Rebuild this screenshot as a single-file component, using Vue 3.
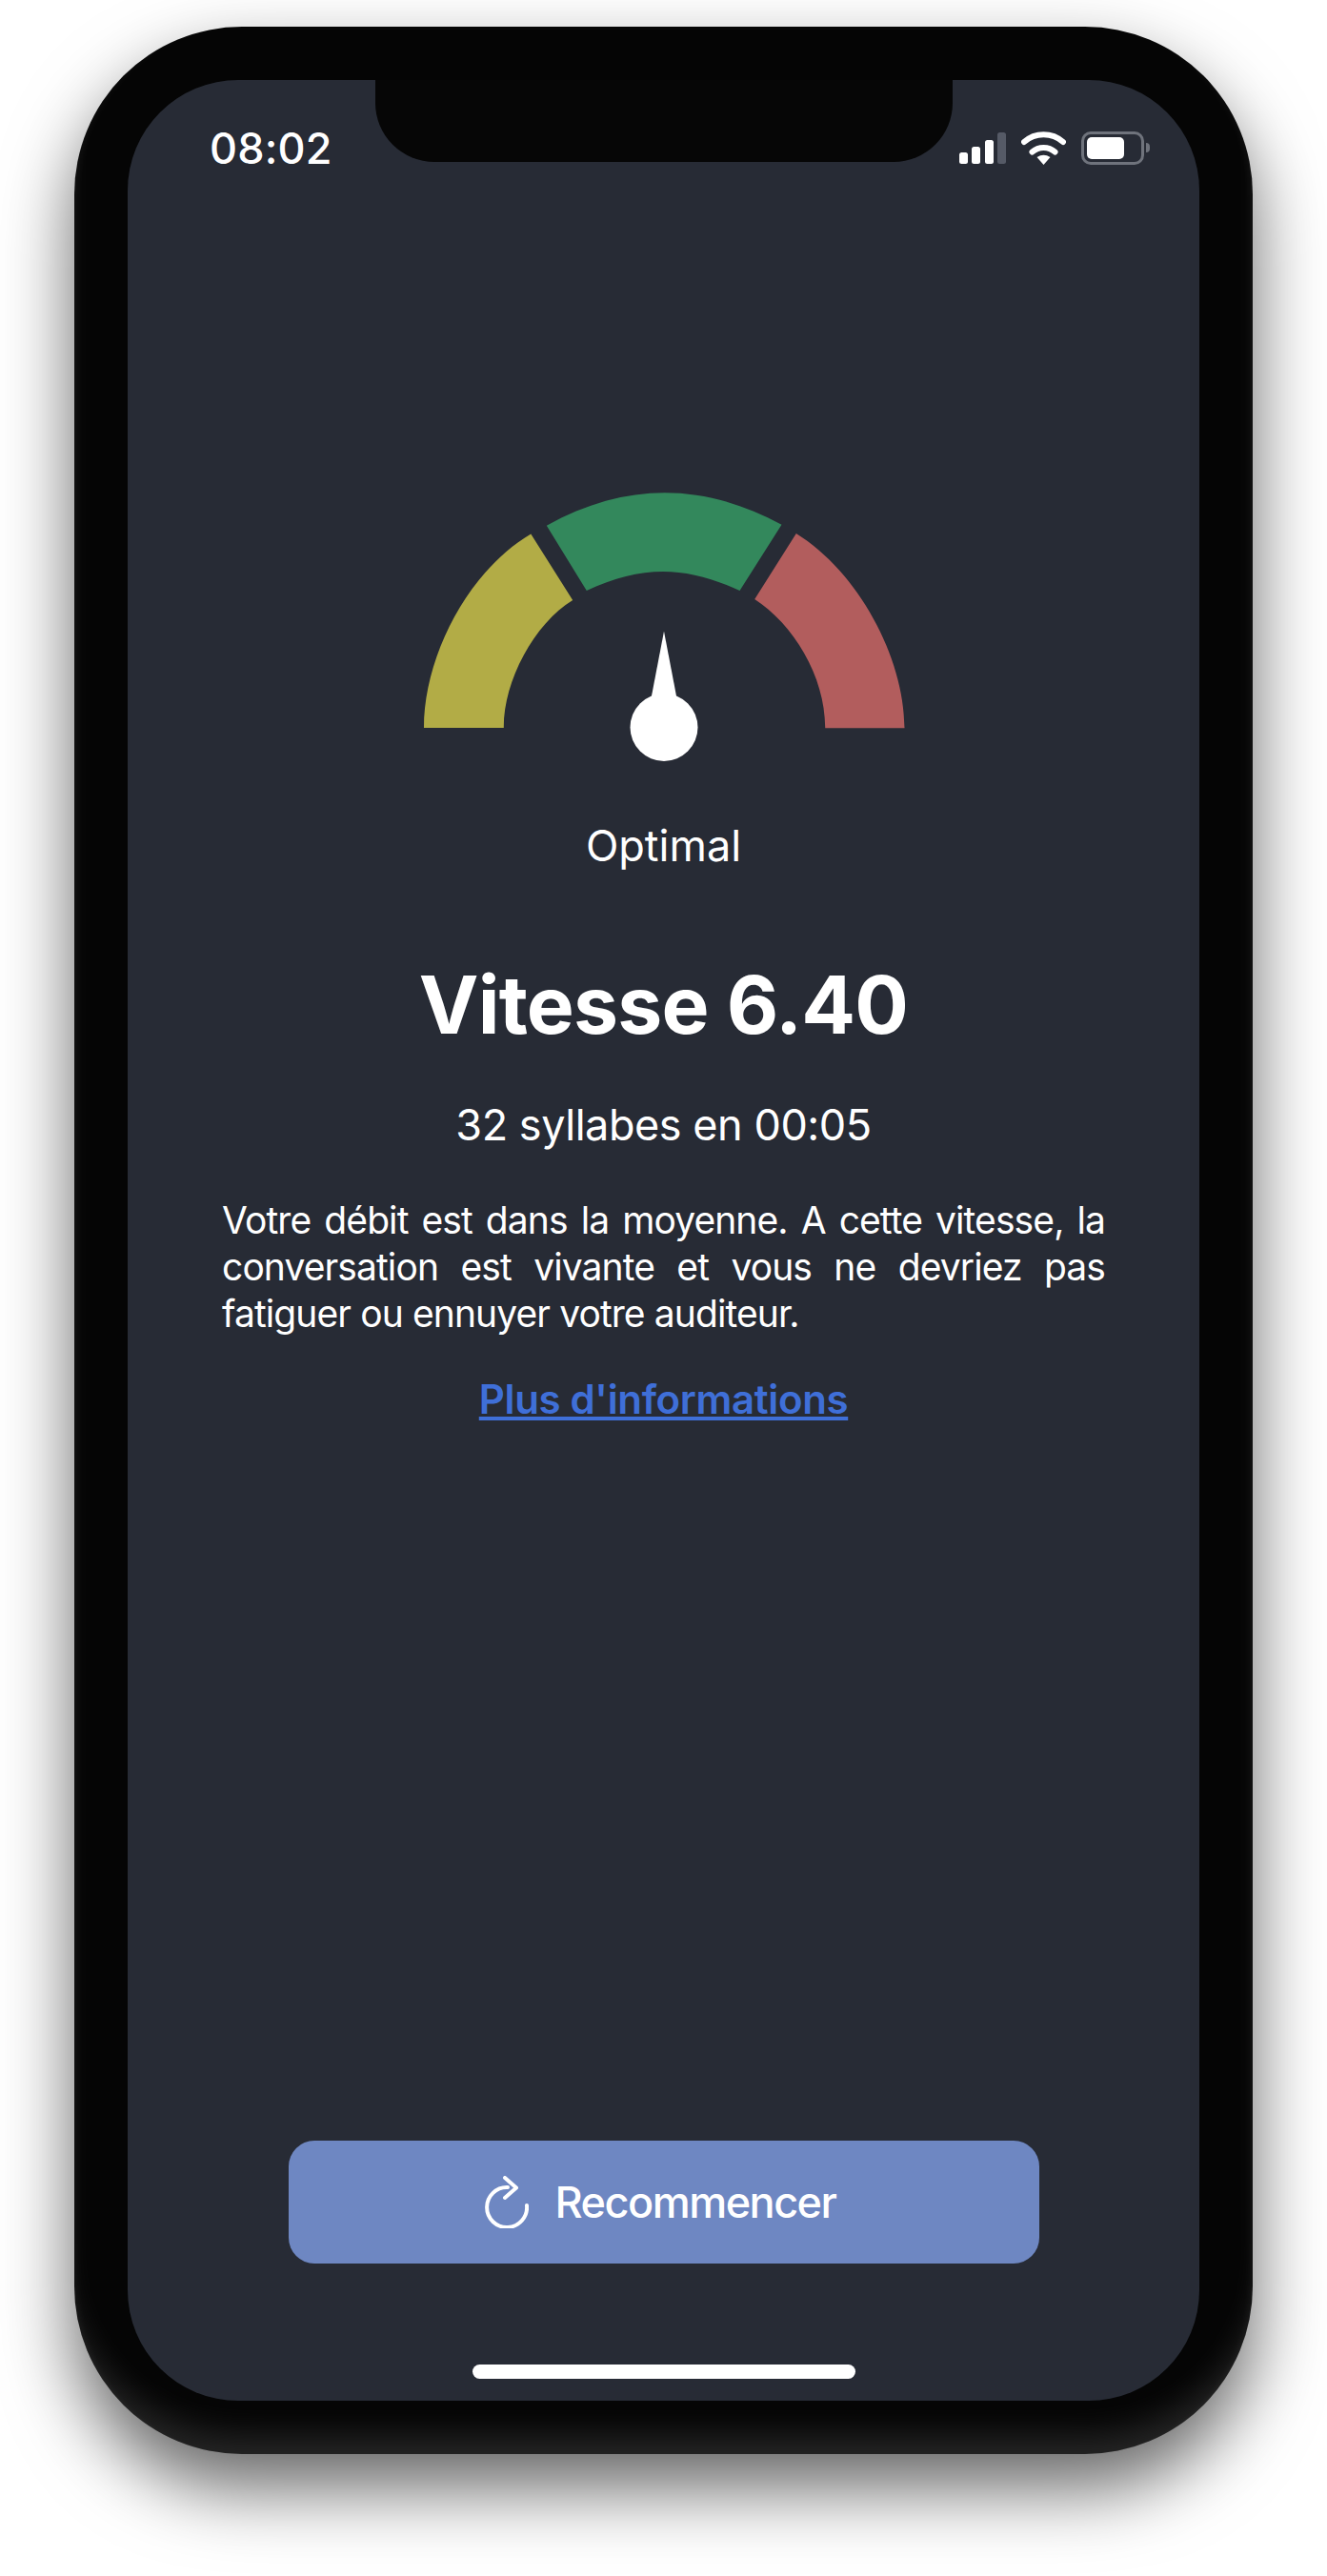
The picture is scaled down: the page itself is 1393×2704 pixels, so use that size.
<script setup>
const segments = [
  {
    color: '#b2ac46',
    d: 'M444.5 764 C444.5 690 490 600 556.8 560.5 L600.7 630 C560 655 528 715 528.3 764 Z'
  },
  {
    color: '#33885c',
    d: 'M573.3 551.7 C656 506 737 506 820 550.7 L776 620 C718 593.3 673 593.3 615.3 620 Z'
  },
  {
    color: '#b25d5d',
    d: 'M835.3 560 C900 600 949 690 949 764.3 L865.7 764.3 C866 710 832 655 791.7 629 Z'
  }
]
const bars = [
  { h: 12, on: true },
  { h: 18, on: true },
  { h: 25, on: true },
  { h: 33, on: false }
]
</script>

<template>
  <div class="page">
    <div class="phone">
      <div class="screen">
        <div class="notch"></div>

        <header class="status">
          <span class="time">08:02</span>
          <div class="indicators">
            <div class="signal">
              <i v-for="b in bars" :key="b.h" :class="{ off: !b.on }" :style="{ height: b.h + 'px' }"></i>
            </div>
            <svg class="wifi" width="47" height="35" viewBox="0 0 47 35" fill="none">
              <path d="M3 11 A31 31 0 0 1 44 11" stroke="#fff" stroke-width="6" stroke-linecap="round" />
              <path d="M11.5 21.5 A18 18 0 0 1 35.5 21.5" stroke="#fff" stroke-width="6" stroke-linecap="round" />
              <path d="M23.5 35 L16.5 27 Q23.5 22.5 30.5 27 Z" fill="#fff" />
            </svg>
            <div class="battery">
              <div class="cell"><div class="charge"></div></div>
              <div class="nub"></div>
            </div>
          </div>
        </header>

        <svg class="gauge" width="560" height="300" viewBox="416.5 510 560 300">
          <path v-for="s in segments" :key="s.color" :d="s.d" :fill="s.color" />
          <path d="M696.5 662.7 L709.6 731 L683.4 731 Z" fill="#fff" />
          <circle cx="696.5" cy="763.5" r="35.5" fill="#fff" />
        </svg>

        <p class="label">Optimal</p>
        <h1 class="title">Vitesse 6.40</h1>
        <p class="count">32 syllabes en 00:05</p>
        <p class="desc">Votre débit est dans la moyenne. A cette vitesse, la conversation est vivante et vous ne devriez pas fatiguer ou ennuyer votre auditeur.</p>
        <a class="link">Plus d'informations</a>

        <div class="spacer"></div>

        <button class="restart">
          <svg width="46" height="55" viewBox="0 0 46 55" fill="none" stroke="#fff" stroke-width="4" stroke-linecap="round" stroke-linejoin="round">
            <path d="M24 12 A21 21 0 1 0 44 31" />
            <path d="M21 2 L33 12.5 L21 23" />
          </svg>
          <span>Recommencer</span>
        </button>

        <div class="home"></div>
      </div>
    </div>
  </div>
</template>

<style>
html, body { margin: 0; background: #fff; }
</style>

<style scoped>
.page {
  width: 1393px;
  height: 2704px;
  padding: 28px 78px 0;
  box-sizing: border-box;
  overflow: hidden;
  font-family: Inter, "Liberation Sans", sans-serif;
  color: #fff;
}
.phone {
  width: 1237px;
  height: 2548px;
  box-sizing: border-box;
  padding: 56px;
  border-radius: 176px;
  background: #050505;
  box-shadow:
    inset 0 -34px 34px -14px rgba(255, 255, 255, .13),
    inset 8px 0 10px -6px rgba(255, 255, 255, .05),
    inset -8px 0 10px -6px rgba(255, 255, 255, .05),
    0 36px 76px rgba(0, 0, 0, .6);
}
.screen {
  position: relative;
  height: 2436px;
  border-radius: 116px;
  background: #272b35;
  display: flex;
  flex-direction: column;
  align-items: center;
  overflow: hidden;
}
.notch {
  position: absolute;
  top: 0;
  left: 260px;
  width: 606px;
  height: 86px;
  background: #060606;
  border-radius: 0 0 62px 62px;
}
.status {
  align-self: stretch;
  height: 106px;
  box-sizing: border-box;
  padding: 52px 52px 0 86px;
  display: flex;
  justify-content: space-between;
  align-items: flex-start;
}
.time {
  font-size: 45px;
  font-weight: 500;
  line-height: 40px;
  letter-spacing: .2px;
}
.indicators {
  display: flex;
  align-items: center;
  height: 36px;
  margin-top: 1px;
}
.signal {
  display: flex;
  align-items: flex-end;
  gap: 4.5px;
  height: 33px;
  margin-right: 16px;
}
.signal i {
  width: 9px;
  background: #fff;
  border-radius: 2.5px;
}
.signal i.off { background: #555a66; }
.wifi { margin-right: 16px; }
.battery {
  display: flex;
  align-items: center;
  gap: 2px;
}
.cell {
  width: 66px;
  height: 35px;
  box-sizing: border-box;
  border: 3px solid #6f737c;
  border-radius: 10px;
  padding: 3px;
}
.charge {
  width: 39px;
  height: 100%;
  background: #fff;
  border-radius: 5px;
}
.nub {
  width: 4px;
  height: 10px;
  background: #6f737c;
  border-radius: 0 4px 4px 0;
}
.gauge {
  display: block;
  margin-top: 320px;
}
.label {
  margin: 51px 0 0;
  font-size: 45px;
  line-height: 54px;
  font-weight: 400;
}
.title {
  margin: 90px 0 0;
  font-size: 84px;
  line-height: 100px;
  font-weight: 700;
  letter-spacing: -.8px;
}
.count {
  margin: 49px 0 0;
  font-size: 45px;
  line-height: 54px;
  font-weight: 400;
  letter-spacing: -.45px;
}
.desc {
  margin: 48px 0 0;
  align-self: stretch;
  padding: 0 99px;
  font-size: 39px;
  line-height: 49px;
  font-weight: 400;
  letter-spacing: -.9px;
  text-align: justify;
}
.link {
  margin-top: 40px;
  font-size: 42px;
  line-height: 52px;
  font-weight: 600;
  letter-spacing: -.35px;
  color: #3f6fd8;
  text-decoration: underline;
}
.spacer { flex: 1; }
.restart {
  width: 788px;
  height: 129px;
  margin-left: 1px;
  border: 0;
  border-radius: 27px;
  background: #6e87c2;
  color: #fff;
  font-family: inherit;
  font-size: 45px;
  font-weight: 500;
  letter-spacing: -1.5px;
  display: flex;
  align-items: center;
  justify-content: center;
  gap: 28px;
  padding: 0 8px 0 0;
}
.home {
  width: 402px;
  height: 15px;
  margin: 106px 0 23px;
  border-radius: 8px;
  background: #fff;
}
</style>
